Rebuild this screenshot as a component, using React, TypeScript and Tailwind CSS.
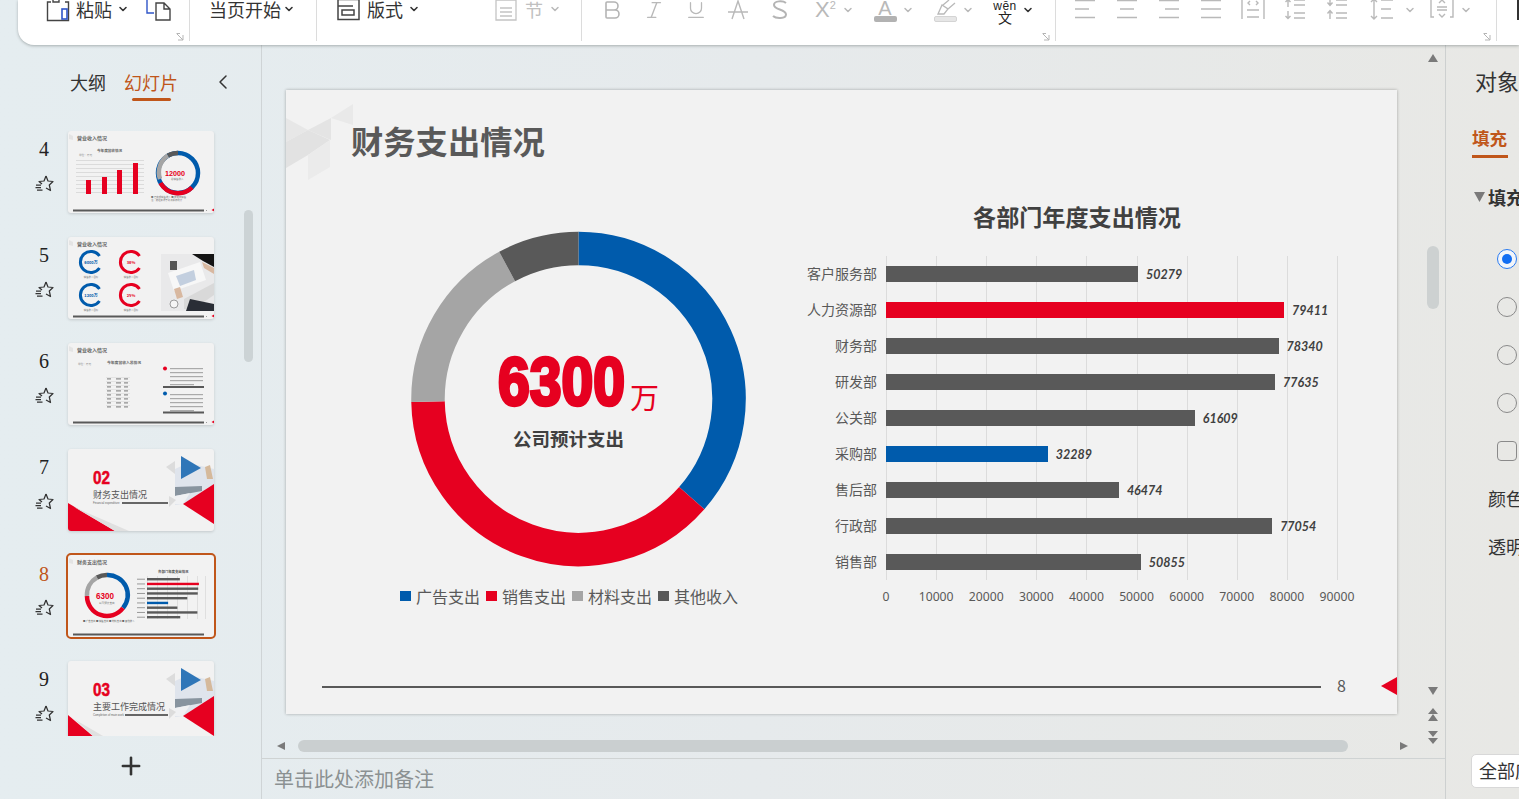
import React from "react";
import { Bold, ChevronDown, ChevronLeft, Italic, Plus, Underline } from "lucide-react";

const GRAY = "#b9b9b9";

function Chev({ dark = false }: { dark?: boolean }) {
  return dark ? (
    <ChevronDown size={12} strokeWidth={3.2} className="w-[12px] shrink-0 text-[#333]" />
  ) : (
    <ChevronDown size={12} strokeWidth={3} className="w-[12px] shrink-0 text-[#b9b9b9]" />
  );
}

function Corner() {
  return (
    <svg width="9" height="8" viewBox="0 0 9 8" className="self-end mr-[4px]">
      <path d="M1 1 L7 7 M7 2 V7 H2 M0.5 0.5 H4" stroke="#b5b5b5" strokeWidth="1" fill="none" />
    </svg>
  );
}

function Lines({ kind }: { kind: "left" | "center" | "right" | "just" }) {
  const mid = kind === "left" ? "M1 10H15" : kind === "center" ? "M4 10H18" : kind === "right" ? "M7 10H21" : "M1 10H21";
  return (
    <svg width="22" height="22" viewBox="0 0 22 22" fill="none" stroke={GRAY} strokeWidth="1.4">
      <path d={`M1 1.5H21 ${mid} M1 18.5H21`} />
    </svg>
  );
}

function Cell({ children }: { children: React.ReactNode }) {
  return <div className="w-[42px] flex justify-center shrink-0">{children}</div>;
}

function Toolbar() {
  return (
    <header className="relative z-10 ml-[18px] h-[45px] shrink-0 bg-white rounded-bl-[16px] shadow-[0_1px_3px_rgba(90,100,100,0.45)] flex items-start overflow-hidden text-[18px] text-[#333] leading-[20px]">
      <div className="w-[171px] h-[41px] shrink-0 flex flex-col justify-between">
        <div className="h-[18px] pl-[28px] flex items-center">
          <svg width="24" height="24" viewBox="0 0 24 24" fill="none" className="shrink-0 mt-[4px]">
            <path d="M5 3H1.5V21.5H22.5V3H19" stroke="#444" strokeWidth="1.4" />
            <path d="M7 -1V3H13V-1" stroke="#444" strokeWidth="1.4" />
            <rect x="16" y="10" width="5" height="10" stroke="#2f55c8" strokeWidth="1.6" />
          </svg>
          <span className="ml-[6px]">粘贴</span>
          <span className="ml-[5px]"><Chev dark /></span>
          <svg width="26" height="24" viewBox="0 0 26 24" fill="none" className="ml-[17px] shrink-0 mt-[4px]">
            <path d="M1 0V14H8" stroke="#2f55c8" strokeWidth="1.4" />
            <path d="M10 4H18L24 10V21H10Z M18 4V10H24" stroke="#444" strokeWidth="1.4" />
          </svg>
        </div>
        <Corner />
      </div>
      <div className="w-px h-[41px] bg-[#dcdcdc] shrink-0" />
      <div className="w-[126px] h-[18px] pl-[19px] flex items-center shrink-0">
        <span>当页开始</span>
        <span className="ml-[2px]"><Chev dark /></span>
      </div>
      <div className="w-px h-[41px] bg-[#dcdcdc] shrink-0" />
      <div className="w-[264px] h-[18px] pl-[20px] flex items-center shrink-0">
        <svg width="23" height="22" viewBox="0 0 23 22" fill="none" className="shrink-0 mt-[2px]">
          <path d="M1 0.5H22V20.5H1Z M1 7H16 M5 11H17V16H5Z" stroke="#444" strokeWidth="1.5" />
        </svg>
        <span className="ml-[7px]">版式</span>
        <span className="ml-[5px]"><Chev dark /></span>
        <svg width="22" height="22" viewBox="0 0 22 22" fill="none" stroke="#c4c4c4" strokeWidth="1.3" className="ml-[75px] shrink-0 mt-[2px]">
          <path d="M1 1H21V21H1Z M5 9H17 M5 13H17 M5 17H17" />
        </svg>
        <span className="ml-[8px] text-[#c0c0c0]">节</span>
        <span className="ml-[6px]"><Chev /></span>
      </div>
      <div className="w-px h-[41px] bg-[#dcdcdc] shrink-0" />
      <div className="w-[473px] h-[41px] shrink-0 flex flex-col justify-between">
        <div className="h-[20px] pl-[9px] flex items-center">
          <Cell><Bold size={24} strokeWidth={1.6} className="text-[#b4b4b4]" /></Cell>
          <Cell><Italic size={22} strokeWidth={1.5} className="text-[#b9b9b9]" /></Cell>
          <Cell><Underline size={22} strokeWidth={1.4} className="text-[#b9b9b9]" /></Cell>
          <Cell>
            <svg width="20" height="20" viewBox="0 0 20 20" fill="none" stroke={GRAY} strokeWidth="1.4">
              <path d="M4 19L10 1L16 19 M0 12H20" />
            </svg>
          </Cell>
          <Cell>
            <svg width="18" height="20" viewBox="0 0 18 20" fill="none" stroke="#b4b4b4" strokeWidth="2">
              <path d="M15 3C12 0.5 3 0.5 3 5C3 10 15 9 15 14.5C15 19 5 19 2 16" />
            </svg>
          </Cell>
          <div className="ml-[14px] w-[22px] shrink-0 text-[#b9b9b9] text-[22px] leading-[20px] font-['Liberation_Sans',sans-serif] flex items-start">
            X<span className="text-[11px] leading-[11px]">2</span>
          </div>
          <div className="ml-[5px]"><Chev /></div>
          <div className="ml-[19px] w-[24px] flex flex-col items-center shrink-0 mt-[2px]">
            <span className="text-[#b9b9b9] text-[20px] leading-[16px] font-['Liberation_Sans',sans-serif]">A</span>
            <span className="w-[23px] h-[6px] rounded-[2px] bg-[#b2b2b2]" />
          </div>
          <div className="ml-[5px]"><Chev /></div>
          <div className="ml-[19px] w-[24px] flex flex-col items-center shrink-0 mt-[2px]">
            <svg width="22" height="16" viewBox="0 0 22 16" fill="none" stroke={GRAY} strokeWidth="1.3">
              <path d="M4 14L8 5L14 9L10 14Z M9 5L15 0 M14 9L21 3" />
            </svg>
            <span className="w-[23px] h-[6px] rounded-[2px] bg-[#e6e6e6] border border-[#d4d4d4]" />
          </div>
          <div className="ml-[5px]"><Chev /></div>
          <div className="ml-[19px] w-[24px] h-[20px] flex flex-col items-center shrink-0 text-[#222] overflow-visible">
            <span className="text-[12px] leading-[10px] mt-[1px] font-['Liberation_Sans',sans-serif] tracking-[0.5px]">wēn</span>
            <span className="text-[14px] leading-[12px]">文</span>
          </div>
          <div className="ml-[5px]"><Chev dark /></div>
        </div>
        <Corner />
      </div>
      <div className="w-px h-[41px] bg-[#dcdcdc] shrink-0" />
      <div className="w-[440px] h-[41px] shrink-0 flex flex-col justify-between">
        <div className="h-[20px] pl-[8px] flex items-center">
          <Cell><Lines kind="left" /></Cell>
          <Cell><Lines kind="center" /></Cell>
          <Cell><Lines kind="right" /></Cell>
          <Cell><Lines kind="just" /></Cell>
          <Cell>
            <svg width="24" height="22" viewBox="0 0 24 22" fill="none" stroke={GRAY} strokeWidth="1.4">
              <path d="M1 0V20 M23 0V20 M6 11H18 M6 18H18 M9 2L7 4L9 6 M15 2L17 4L15 6" />
            </svg>
          </Cell>
          <Cell>
            <svg width="22" height="22" viewBox="0 0 22 22" fill="none" stroke={GRAY} strokeWidth="1.4">
              <path d="M4 8V0M1.5 3L4 0.5L6.5 3 M4 12V20M1.5 17L4 19.5L6.5 17 M10 1H21 M10 6H21 M10 14H21 M10 19H21" />
            </svg>
          </Cell>
          <Cell>
            <svg width="22" height="22" viewBox="0 0 22 22" fill="none" stroke={GRAY} strokeWidth="1.4">
              <path d="M4 0V6M1.5 3.5L4 6.5L6.5 3.5 M4 20V12M1.5 14.5L4 11.5L6.5 14.5 M10 1H21 M10 6H21 M10 14H21 M10 19H21" />
            </svg>
          </Cell>
          <svg width="24" height="22" viewBox="0 0 24 22" fill="none" stroke={GRAY} strokeWidth="1.4" className="ml-[12px] shrink-0">
            <path d="M4 0V20M1 3L4 0L7 3M1 17L4 20L7 17 M11 1H23 M11 10H21 M11 19H23" />
          </svg>
          <div className="ml-[10px]"><Chev /></div>
          <svg width="24" height="22" viewBox="0 0 24 22" fill="none" stroke={GRAY} strokeWidth="1.4" className="ml-[14px] shrink-0">
            <path d="M4 0H1V18H4 M20 0H23V18H20 M7 8H17 M7 11H17 M9 4L12 1L15 4 M9 15L12 18L15 15" />
          </svg>
          <div className="ml-[6px]"><Chev /></div>
        </div>
        <Corner />
      </div>
      <div className="w-px h-[41px] bg-[#dcdcdc] shrink-0" />
      <div className="ml-[20px] w-[2px] h-[20px] bg-[#333] shrink-0" />
    </header>
  );
}

function StarIcon() {
  return (
    <svg width="19" height="17" viewBox="0 0 19 17" fill="none" stroke="#333" strokeWidth="1.25">
      <path d="M11 1L13 6L18 6.5L14.3 10L15.5 15.5L11 13" strokeLinejoin="round" />
      <path d="M11 1L9 6L4 6.5L7 9" strokeLinejoin="round" />
      <path d="M1 10H6 M0.5 12.5H6 M2 15H7.5" />
    </svg>
  );
}

const tt = { fontFamily: "'Noto Sans CJK SC',sans-serif" };

function Foot() {
  return (
    <>
      <rect x="5" y="78.5" width="131" height="2" fill="#595959" />
      <rect x="138" y="79" width="1" height="1" fill="#999" />
      <path d="M146 77.5L143.5 79L146 80.5Z" fill="#e60020" />
    </>
  );
}

function Mark({ title }: { title: string }) {
  return (
    <>
      <path d="M1 3L5 5V9L1 8Z" fill="#e4e4e4" />
      <text x="9" y="8.5" fontSize="5" fontWeight="700" fill="#666" style={tt}>{title}</text>
    </>
  );
}

function Thumb4() {
  const bars = [[18, 49], [34, 46], [49, 39], [65, 32]];
  return (
    <svg viewBox="0 0 146 82" className="w-full h-full">
      <Mark title="营业收入情况" />
      <text x="29" y="21" fontSize="3.6" fontWeight="700" fill="#666" style={tt}>今年度营收情况</text>
      <text x="11" y="25" fontSize="2.6" fill="#888" style={tt}>单位：万元</text>
      {[29, 33, 37, 41, 45, 49, 53, 57, 61].map((y) => (
        <rect key={y} x="8" y={y} width="68" height="0.6" fill="#ccc" />
      ))}
      {bars.map(([x, y]) => (
        <rect key={x} x={x} y={y} width="5" height={63 - y} fill="#e60020" />
      ))}
      <circle cx="110" cy="42" r="20" fill="none" stroke="#005bac" strokeWidth="4.5" />
      <path d="M92.5 52A20 20 0 0 0 124 56.5" fill="none" stroke="#e60020" strokeWidth="4.5" />
      <path d="M92 48A20 20 0 0 1 100 24.5" fill="none" stroke="#a5a5a5" strokeWidth="4.5" />
      <path d="M100 24.5A20 20 0 0 1 110 22" fill="none" stroke="#595959" strokeWidth="4.5" />
      <text x="97" y="44.5" fontSize="8" fontWeight="800" fill="#e60020" fontFamily="'Liberation Sans',sans-serif" textLength="20" lengthAdjust="spacingAndGlyphs">12000</text>
      <text x="103" y="49" fontSize="2.5" fill="#777" style={tt}>总销售收入</text>
      <text x="83" y="66.5" fontSize="2.4" fill="#777" style={tt}>■ 已完成销售收入 ■ 未完成销售</text>
      <text x="83" y="70" fontSize="2.4" fill="#777" style={tt}>注：数据来源于财务报表统计</text>
      <Foot />
    </svg>
  );
}

function Ring({ x, y, c, t }: { x: number; y: number; c: string; t: string }) {
  return (
    <>
      <path d={`M${x + 8.5} ${y - 6}A10.5 10.5 0 1 0 ${x + 8.5} ${y + 6}`} fill="none" stroke={c} strokeWidth="3" />
      <text x={x} y={y + 1.5} textAnchor="middle" fontSize="4" fontWeight="700" fill={c} style={tt}>{t}</text>
      <text x={x} y={y + 16} textAnchor="middle" fontSize="2.4" fill="#777" style={tt}>销售收入目标</text>
    </>
  );
}

function Thumb5() {
  return (
    <svg viewBox="0 0 146 82" className="w-full h-full">
      <Mark title="营业收入情况" />
      <Ring x={23} y={25} c="#005bac" t="6000万" />
      <Ring x={63} y={25} c="#e60020" t="38%" />
      <Ring x={23} y={58} c="#005bac" t="1200万" />
      <Ring x={63} y={58} c="#e60020" t="25%" />
      <rect x="93" y="17" width="53" height="57" fill="#e9e9ea" />
      <path d="M124 17H146V30L135 24Z" fill="#141414" />
      <path d="M100 36L132 25L138 43L106 54Z" fill="#f7f7f7" />
      <path d="M108 39L126 33L128 43L112 49Z" fill="#c3cfdf" />
      <path d="M116 62L146 46V58L126 72H116Z" fill="#d9d9d9" />
      <path d="M122 62L146 67V74H118Z" fill="#2a2e36" />
      <path d="M106 52L112 50L115 60L109 62Z" fill="#d8b8a0" />
      <path d="M134 25L146 31V37L136 31Z" fill="#d8b8a0" />
      <rect x="102" y="24" width="7" height="9" fill="#555" />
      <circle cx="106" cy="67" r="4" fill="#f5f5f5" stroke="#777" strokeWidth="0.7" />
      <Foot />
    </svg>
  );
}

function Thumb6() {
  const para = (x: number, y: number) =>
    [0, 4, 8, 12, 16].map((d) => <rect key={d} x={x} y={y + d} width={d === 16 ? 24 : 33} height="1.2" fill="#aaa" />);
  return (
    <svg viewBox="0 0 146 82" className="w-full h-full">
      <Mark title="营业收入情况" />
      <text x="39" y="20.5" fontSize="3.8" fontWeight="700" fill="#666" style={tt}>今年度营收入总情况</text>
      <text x="10" y="22" fontSize="2.6" fill="#888" style={tt}>单位：万元</text>
      {[34, 38, 42, 46, 50, 54, 58, 62].map((y) => (
        <g key={y}>
          <rect x="38" y={y} width="24" height="0.4" fill="#ccc" />
          <rect x="39" y={y + 1.4} width="4" height="1" fill="#777" />
          <rect x="48" y={y + 1.4} width="5" height="1" fill="#777" />
          <rect x="56" y={y + 1.4} width="4" height="1" fill="#777" />
        </g>
      ))}
      <circle cx="97" cy="25.5" r="2" fill="#e60020" />
      {para(102, 25)}
      <rect x="95" y="43" width="41" height="2" fill="#595959" />
      <circle cx="97" cy="50.5" r="2" fill="#005bac" />
      {para(102, 51)}
      <rect x="95" y="68.5" width="41" height="2" fill="#595959" />
      <Foot />
    </svg>
  );
}

function Cover({ num, title, sub, redX, lineX }: { num: string; title: string; sub: string; redX: number; lineX: number }) {
  return (
    <svg viewBox="0 0 146 82" className="w-full h-full">
      <path d={`M0 54L${redX} 82H0Z`} fill="#e60020" />
      <path d={`M6 58L${redX + 14} 82H${redX}Z`} fill="#e0e0e0" />
      <path d="M98 18L107 12V25Z" fill="#dcdcdc" />
      <path d="M107 20L120 14L146 20V38L115 55L107 56Z" fill="#dfe4ec" />
      <path d="M107 38L134 37V42L107 47Z" fill="#88949f" />
      <path d="M107 47L122 44L115 55H107Z" fill="#f0f1f3" />
      <path d="M137 18L142 16L145 30L139 30Z" fill="#d5b99b" />
      <path d="M113 7L133 19L113 30Z" fill="#2f76b8" />
      <path d="M146 35V75L115 55Z" fill="#e60020" />
      <path d="M101 47L108 51L101 58Z" fill="#dcdcdc" />
      <text x="25" y="35" fontSize="18" fontWeight="900" fill="#e60020" stroke="#e60020" strokeWidth="0.5" fontFamily="'Liberation Sans',sans-serif" textLength="17" lengthAdjust="spacingAndGlyphs">{num}</text>
      <text x="25" y="49" fontSize="9" fill="#555" style={tt}>{title}</text>
      <text x="25" y="55" fontSize="2.8" fill="#666" fontFamily="'Liberation Sans',sans-serif">{sub}</text>
      <rect x={lineX} y="53" width={100 - lineX} height="2" fill="#666" />
    </svg>
  );
}

function Thumb8() {
  const vals = [50279, 79411, 78340, 77635, 61609, 32289, 46474, 77054, 50855];
  return (
    <svg viewBox="0 0 146 82" className="w-full h-full">
      <Mark title="财务支出情况" />
      <text x="90" y="18" fontSize="3.4" fontWeight="700" fill="#555" style={tt}>各部门年度支出情况</text>
      {[79, 89, 99, 109, 119, 129, 137].map((x) => (
        <rect key={x} x={x} y="21" width="0.5" height="43" fill="#ccc" />
      ))}
      {vals.map((v, i) => (
        <g key={i}>
          <rect x="79" y={23 + i * 4.75} width={v / 1530} height="2.4" fill={i === 1 ? "#e60020" : i === 5 ? "#005bac" : "#595959"} />
          <rect x="69" y={23.7 + i * 4.75} width="8" height="1" fill="#999" />
        </g>
      ))}
      <g fill="none" strokeWidth="4.5">
        <path d="M39 20A20 20 0 0 1 55 53" stroke="#005bac" />
        <path d="M55 53A20 20 0 0 1 19 41" stroke="#e60020" />
        <path d="M19 41A20 20 0 0 1 29 22.5" stroke="#a5a5a5" />
        <path d="M29 22.5A20 20 0 0 1 39 20" stroke="#595959" />
      </g>
      <text x="28" y="44" fontSize="8.5" fontWeight="800" fill="#e60020" fontFamily="'Liberation Sans',sans-serif" textLength="18" lengthAdjust="spacingAndGlyphs">6300</text>
      <text x="31" y="49" fontSize="2.6" fill="#666" style={tt}>公司预计支出</text>
      <text x="15" y="67" fontSize="2.4" fill="#666" style={tt}>■ 广告支出 ■ 销售支出 ■ 材料支出 ■ 其他收入</text>
      <rect x="5" y="78.5" width="131" height="2" fill="#595959" />
    </svg>
  );
}

function Row({ n, active = false, children }: { n: number; active?: boolean; children: React.ReactNode }) {
  return (
    <div className="h-[106px] shrink-0 flex items-start">
      <div className="w-[68px] shrink-0 flex flex-col items-center pl-[20px]">
        <span className={active ? "text-[#c0561a] text-[20px] leading-[24px] mt-[7px] font-['Liberation_Serif',serif]" : "text-[#222] text-[20px] leading-[24px] mt-[6px] font-['Liberation_Serif',serif]"}>
          {n}
        </span>
        <span className={active ? "mt-[13px]" : "mt-[14px]"}><StarIcon /></span>
      </div>
      <div
        className={
          active
            ? "w-[146px] h-[82px] bg-[#f2f2f2] rounded-[3px] outline-2 outline-offset-0 outline-[#c0561a]"
            : "w-[146px] h-[82px] bg-[#f2f2f2] rounded-[3px] overflow-hidden shadow-[0_1px_3px_rgba(0,0,0,0.15)]"
        }
      >
        {children}
      </div>
    </div>
  );
}

function Sidebar() {
  return (
    <aside className="relative w-[262px] shrink-0 border-r border-[#cfd4d6] flex flex-col">
      <div className="h-[86px] shrink-0 pl-[70px] pt-[22px] flex items-start text-[18px] leading-[30px]">
        <span className="text-[#333]">大纲</span>
        <div className="ml-[18px] w-[54px] flex flex-col items-center">
          <span className="text-[#c0561a]">幻灯片</span>
          <span className="w-[39px] h-[3px] mt-[1px] rounded-full bg-[#c0561a]" />
        </div>
        <ChevronLeft size={24} strokeWidth={1.5} className="ml-[33px] mt-[3px] text-[#333]" />
      </div>
      <div className="h-[605px] shrink-0 overflow-hidden flex flex-col">
        <Row n={4}><Thumb4 /></Row>
        <Row n={5}><Thumb5 /></Row>
        <Row n={6}><Thumb6 /></Row>
        <Row n={7}><Cover num="02" title="财务支出情况" sub="Financial expenditure" redX={47} lineX={54} /></Row>
        <Row n={8} active><Thumb8 /></Row>
        <Row n={9}><Cover num="03" title="主要工作完成情况" sub="Completion of main work" redX={33} lineX={57} /></Row>
      </div>
      <Plus size={28} strokeWidth={2.2} className="ml-[117px] mt-[16px] text-[#333]" />
      <div className="absolute left-[244px] top-[165px] w-[9px] h-[152px] rounded-full bg-[#ccd3d5]" />
    </aside>
  );
}

const DEPTS = [
  { name: "客户服务部", v: 50279, c: "#595959" },
  { name: "人力资源部", v: 79411, c: "#e60020" },
  { name: "财务部", v: 78340, c: "#595959" },
  { name: "研发部", v: 77635, c: "#595959" },
  { name: "公关部", v: 61609, c: "#595959" },
  { name: "采购部", v: 32289, c: "#005bac" },
  { name: "售后部", v: 46474, c: "#595959" },
  { name: "行政部", v: 77054, c: "#595959" },
  { name: "销售部", v: 50855, c: "#595959" },
];
const TICKS = [0, 10000, 20000, 30000, 40000, 50000, 60000, 70000, 80000, 90000];
const LEGEND = [
  { t: "广告支出", c: "#005bac" },
  { t: "销售支出", c: "#e60020" },
  { t: "材料支出", c: "#a5a5a5" },
  { t: "其他收入", c: "#595959" },
];

function arc(a0: number, a1: number, r = 150.5, cx = 168.5, cy = 168) {
  const p = (a: number) => {
    const t = ((a - 90) * Math.PI) / 180;
    return `${(cx + r * Math.cos(t)).toFixed(2)} ${(cy + r * Math.sin(t)).toFixed(2)}`;
  };
  return `M${p(a0)}A${r} ${r} 0 ${a1 - a0 > 180 ? 1 : 0} 1 ${p(a1)}`;
}

function Donut() {
  return (
    <div className="relative w-[337px] h-[336px] ml-[10px]">
      <svg width="337" height="336" viewBox="0 0 337 336" fill="none" strokeWidth="33.5">
        <path d={arc(0, 131.2)} stroke="#005bac" />
        <path d={arc(131.2, 269)} stroke="#e60020" />
        <path d={arc(269, 331.7)} stroke="#a5a5a5" />
        <path d={arc(331.7, 360)} stroke="#595959" />
      </svg>
      <div className="absolute left-[88px] top-[114px] flex items-end whitespace-nowrap">
        <span className="w-[132px] text-[68px] leading-[72px] font-bold text-[#e60020] font-['Liberation_Sans',sans-serif] origin-left scale-x-[0.84] [-webkit-text-stroke:3.5px_#e60020]">
          6300
        </span>
        <span className="text-[29px] leading-[40px] mb-[1px] text-[#e60020]">万</span>
      </div>
      <div className="absolute left-[103px] top-[193px] text-[18.5px] leading-[28px] font-bold text-[#404040] whitespace-nowrap">
        公司预计支出
      </div>
    </div>
  );
}

function Chart() {
  return (
    <div className="ml-[50px] w-[574px] flex flex-col">
      <h2 className="text-center text-[23.1px] leading-[34px] font-bold text-[#404040]">各部门年度支出情况</h2>
      <div className="relative mt-[23px]">
        <div className="absolute left-[96px] top-0 bottom-0 w-[452px] flex justify-between">
          {TICKS.map((t) => (
            <div key={t} className="w-px bg-[#dcdcdc]" />
          ))}
        </div>
        {DEPTS.map((d) => (
          <div key={d.name} className="relative h-[36px] flex items-center">
            <span className="w-[87px] shrink-0 text-right text-[14px] text-[#595959] leading-[20px] -mt-[2px]">{d.name}</span>
            <div className="ml-[9px] h-[16px]" style={{ width: (d.v / 90000) * 451, background: d.c }} />
            <span className="ml-[8px] mt-[2px] text-[12.5px] font-bold italic text-[#404040] font-['Lato',sans-serif]">{d.v}</span>
          </div>
        ))}
      </div>
      <div className="mt-[8px] ml-[95.5px] w-[452px] flex justify-between text-[12.2px] leading-[18px] text-[#595959] font-['Noto_Sans',sans-serif]">
        {TICKS.map((t) => (
          <div key={t} className="w-px flex justify-center">
            <span>{t}</span>
          </div>
        ))}
      </div>
    </div>
  );
}

function Slide() {
  return (
    <section className="relative w-[1111px] h-[624px] shrink-0 bg-[#f2f2f2] shadow-[0_0_3px_rgba(0,0,0,0.3)] flex flex-col overflow-hidden">
      <svg width="70" height="92" viewBox="0 0 70 92" className="absolute left-0 top-0">
        <path d="M0 28L22 40L0 52Z" fill="#e7e7e7" />
        <path d="M22 40L45 28V50Z" fill="#e4e4e4" />
        <path d="M45 28L67 14V35Z" fill="#e9e9e9" />
        <path d="M0 52L22 40L44 50L22 65L0 78Z" fill="#e2e2e2" />
        <path d="M22 65L44 50V77L22 90Z" fill="#ebebeb" />
      </svg>
      <h1 className="relative pl-[65px] pt-[26px] text-[32.3px] leading-[48px] font-bold text-[#595959]">财务支出情况</h1>
      <div className="mt-[35px] flex items-start">
        <div className="ml-[114px] w-[340px] pt-[32px] flex flex-col">
          <Donut />
          <div className="mt-[17px] flex items-center whitespace-nowrap text-[16px] leading-[24px] text-[#595959]">
            {LEGEND.map((l) => (
              <div key={l.t} className="w-[86px] shrink-0 flex items-center">
                <span className="w-[11px] h-[10px] mr-[5px]" style={{ background: l.c }} />
                {l.t}
              </div>
            ))}
          </div>
        </div>
        <Chart />
      </div>
      <footer className="mt-auto mb-[19px] pl-[36px] h-[20px] flex items-center">
        <div className="w-[999px] h-[2px] mt-[4px] bg-[#595959]" />
        <span className="ml-[16px] text-[16px] leading-[20px] text-[#595959] -mt-[1px]">8</span>
        <svg width="16" height="18" viewBox="0 0 16 18" className="ml-auto mt-[2px]">
          <path d="M16 0V18L0 9Z" fill="#e60020" />
        </svg>
      </footer>
    </section>
  );
}

function Tri({ d }: { d: string }) {
  return (
    <svg width="10" height="8" viewBox="0 0 10 8">
      <path d={d} fill="#7a7a7a" />
    </svg>
  );
}

function Center() {
  return (
    <main className="w-[1183px] shrink-0 flex flex-col">
      <div className="h-[713px] shrink-0 flex">
        <div className="w-[1165px] shrink-0 pt-[45px] pl-[24px] flex flex-col">
          <Slide />
          <div className="mt-[26px] h-[12px] flex items-center -ml-[10px]">
            <Tri d="M1 4L9 0V8Z" />
            <div className="ml-[12px] w-[1050px] h-[12px] rounded-full bg-[#cacfd0]" />
            <div className="ml-[51px]"><Tri d="M9 4L1 0V8Z" /></div>
          </div>
        </div>
        <div className="w-[12px] flex flex-col items-center">
          <div className="mt-[9px]"><Tri d="M5 0L10 8H0Z" /></div>
          <div className="mt-[184px] w-[12px] h-[63px] rounded-full bg-[#cdd1d1]" />
          <div className="mt-[378px]"><Tri d="M0 0H10L5 8Z" /></div>
          <svg width="10" height="13" viewBox="0 0 10 13" className="mt-[13px]">
            <path d="M5 0L10 6H0Z M5 6L10 13H0Z" fill="#7a7a7a" />
          </svg>
          <svg width="10" height="13" viewBox="0 0 10 13" className="mt-[10px]">
            <path d="M0 0H10L5 6Z M0 7H10L5 13Z" fill="#7a7a7a" />
          </svg>
        </div>
      </div>
      <div className="flex-1 border-t border-[#cfd3d3] pl-[12px] pt-[5px] text-[20px] leading-[30px] text-[#8b9192]">单击此处添加备注</div>
    </main>
  );
}

function PropPanel() {
  const radio = "w-[20px] h-[20px] rounded-full border-[1.5px] border-[#8a8a8a] shrink-0";
  return (
    <aside className="flex-1 min-w-0 border-l border-[#cdd0d0] overflow-hidden flex flex-col whitespace-nowrap text-[#333]">
      <div className="pl-[29px] pt-[20px] text-[22px] leading-[30px]">对象属性</div>
      <div className="ml-[26px] mt-[28px] w-[36px] text-[17.5px] leading-[30px] font-bold text-[#c0561a] border-b-[3px] border-[#c0561a] pb-[2px]">填充</div>
      <div className="ml-[28px] mt-[25px] flex items-center text-[18px] leading-[28px] font-bold">
        <svg width="11" height="10" viewBox="0 0 11 10" className="mr-[3px] shrink-0"><path d="M0 0H11L5.5 10Z" fill="#7a7a7a" /></svg>
        填充与线条
      </div>
      <div className="ml-[51px] mt-[38px] flex flex-col gap-[28px]">
        <div className="w-[20px] h-[20px] rounded-full border-[1.5px] border-[#2a7bf0] flex items-center justify-center bg-[#f2f5fa]">
          <div className="w-[10px] h-[10px] rounded-full bg-[#126ef2]" />
        </div>
        <div className={radio} />
        <div className={radio} />
        <div className={radio} />
        <div className="w-[20px] h-[20px] rounded-[4px] border-[1.5px] border-[#8a8a8a]" />
      </div>
      <div className="ml-[42px] mt-[23px] text-[18px] leading-[28px]">颜色(C)</div>
      <div className="ml-[42px] mt-[20px] text-[18px] leading-[28px]">透明度(T)</div>
      <div className="mt-auto mb-[11px] ml-[25px] w-[120px] h-[34px] shrink-0 bg-white border border-[#d8d8d8] rounded-[5px] pl-[7px] text-[18px] leading-[31px]">全部应用</div>
    </aside>
  );
}

export default function App() {
  return (
    <div className="w-[1519px] h-[799px] overflow-hidden flex flex-col bg-gradient-to-r from-[#e5edf0] via-[#e6eaec] to-[#e8e8e5] font-['Noto_Sans_CJK_SC','Noto_Sans',sans-serif]">
      <Toolbar />
      <div className="flex-1 min-h-0 flex">
        <Sidebar />
        <Center />
        <PropPanel />
      </div>
    </div>
  );
}
